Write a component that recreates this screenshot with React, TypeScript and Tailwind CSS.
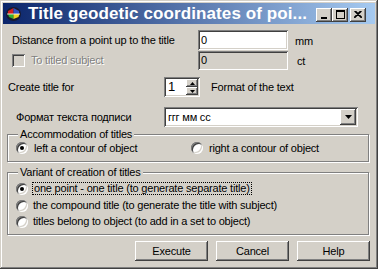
import React from "react";

const sunken =
  "shadow-[inset_1px_1px_#808080,inset_-1px_-1px_#ffffff,inset_2px_2px_#404040,inset_-2px_-2px_#d4d0c8]";
const raised =
  "shadow-[inset_-1px_-1px_#404040,inset_1px_1px_#ffffff,inset_-2px_-2px_#808080,inset_2px_2px_#d4d0c8]";

function Radio({ checked }: { checked?: boolean }) {
  return (
    <div
      className={`w-[12px] h-[12px] shrink-0 rounded-full bg-white flex items-center justify-center ${sunken}`}
    >
      {checked && <div className="w-[4px] h-[4px] rounded-full bg-black" />}
    </div>
  );
}

function TitleBtn({ children }: { children: React.ReactNode }) {
  return (
    <div
      className={`w-[16px] h-[14px] bg-[#d4d0c8] flex items-center justify-center ${raised}`}
    >
      {children}
    </div>
  );
}

export default function App() {
  return (
    <div className="w-[378px] h-[269px] bg-[#d4d0c8] font-['Liberation_Sans',Arial,sans-serif] text-[11px] tracking-[-0.2px] text-black p-[3px] flex flex-col shadow-[inset_-1px_-1px_#404040,inset_1px_1px_#d4d0c8,inset_-2px_-2px_#808080,inset_2px_2px_#ffffff]">
      {/* title bar */}
      <div className="h-[21px] flex items-center bg-[linear-gradient(to_right,#0a246a,#a6caf0)] pl-[2px] pr-[9px]">
        <svg width="17" height="16" viewBox="0 0 17 16" className="shrink-0">
          <ellipse cx="8.5" cy="8" rx="7.5" ry="7" fill="#1a1a2e" />
          <path d="M8.5 2 L3 5 L3 8 L8.5 8 Z" fill="#d02020" />
          <path d="M8.5 2 L14 5 L14 8 L8.5 8 Z" fill="#3050c0" />
          <path d="M3 8 L8.5 8 L8.5 13 L4 11 Z" fill="#30b030" />
          <path d="M8.5 8 L14.5 8 L13.5 11 L8.5 13 Z" fill="#f0d020" />
          <path d="M2 8 L15 8" stroke="#ffffff" strokeWidth="0.8" />
        </svg>
        <span className="ml-[6px] text-white font-bold text-[17px] tracking-[0.1px] leading-none whitespace-nowrap">
          Title geodetic coordinates of poi...
        </span>
        <div className="flex-1" />
        <div className="flex items-center mt-[2px]">
          <TitleBtn>
            <svg width="8" height="8" viewBox="0 0 8 8">
              <rect x="1" y="6" width="6" height="2" fill="#000" />
            </svg>
          </TitleBtn>
          <TitleBtn>
            <svg width="9" height="9" viewBox="0 0 9 9">
              <rect x="0.5" y="0.5" width="8" height="8" fill="none" stroke="#000" />
              <rect x="0" y="0" width="9" height="2" fill="#000" />
            </svg>
          </TitleBtn>
          <div className="w-[2px]" />
          <TitleBtn>
            <svg width="8" height="7" viewBox="0 0 8 7">
              <path d="M0.5 0 L7.5 7 M1.5 0 L8 6.5 M7.5 0 L0.5 7 M6.5 0 L0 6.5" stroke="#000" strokeWidth="1.1" />
            </svg>
          </TitleBtn>
        </div>
      </div>

      {/* row 1 */}
      <div className="mt-[6px] h-[20px] flex items-center">
        <div className="w-[195px] pl-[9px]">Distance from a point up to the title</div>
        <div className={`w-[90px] h-[20px] bg-white flex items-center pl-[3px] ${sunken}`}>0</div>
        <div className="ml-[7px] mt-[2px]">mm</div>
      </div>

      {/* row 2 */}
      <div className="mt-[1px] h-[19px] flex items-center">
        <div className="w-[195px] pl-[9px] flex items-center">
          <div className={`w-[13px] h-[13px] bg-[#d4d0c8] ${sunken}`} />
          <span className="ml-[6px] text-[#808080] [text-shadow:1px_1px_#ffffff]">To titled subject</span>
        </div>
        <div className={`w-[90px] h-[19px] bg-[#d4d0c8] flex items-center pl-[3px] ${sunken}`}>0</div>
        <div className="ml-[9px] mt-[2px]">ct</div>
      </div>

      {/* row 3 */}
      <div className="mt-[7px] h-[20px] flex items-center">
        <div className="w-[161px] pl-[5px]">Create title for</div>
        <div className={`w-[36px] h-[20px] bg-white p-[2px] flex ${sunken}`}>
          <div className="flex-1 flex items-center pl-[2px] text-[13px]">1</div>
          <div className="w-[12px] flex flex-col">
            <div className={`h-[8px] bg-[#d4d0c8] flex items-center justify-center ${raised}`}>
              <svg width="5" height="3" viewBox="0 0 5 3">
                <path d="M0 3 L2.5 0 L5 3 Z" fill="#000" />
              </svg>
            </div>
            <div className={`h-[8px] bg-[#d4d0c8] flex items-center justify-center ${raised}`}>
              <svg width="5" height="3" viewBox="0 0 5 3">
                <path d="M0 0 L2.5 3 L5 0 Z" fill="#000" />
              </svg>
            </div>
          </div>
        </div>
        <div className="ml-[11px]">Format of the text</div>
      </div>

      {/* row 4 */}
      <div className="mt-[10px] h-[20px] flex items-center">
        <div className="w-[161px] pl-[13px]">Формат текста подписи</div>
        <div className={`w-[194px] h-[20px] bg-white p-[2px] flex ${sunken}`}>
          <div className="flex-1 flex items-center pl-[2px]">ггг мм сс</div>
          <div className={`w-[16px] h-[16px] bg-[#d4d0c8] flex items-center justify-center ${raised}`}>
            <svg width="7" height="4" viewBox="0 0 7 4">
              <path d="M0 0 L7 0 L3.5 4 Z" fill="#000" />
            </svg>
          </div>
        </div>
      </div>

      {/* group 1 */}
      <div className="relative mt-[7px] ml-[4px] w-[362px] h-[28px] border border-[#808080] shadow-[inset_1px_1px_#ffffff,1px_1px_#ffffff] flex items-center">
        <div className="absolute left-[10px] top-[-7px] px-[2px] bg-[#d4d0c8] leading-[13px]">
          Accommodation of titles
        </div>
        <div className="w-[183px] pl-[8px] flex items-center">
          <Radio checked />
          <span className="ml-[6px]">left a contour of object</span>
        </div>
        <div className="flex items-center">
          <Radio />
          <span className="ml-[6px]">right a contour of object</span>
        </div>
      </div>

      {/* group 2 */}
      <div className="relative mt-[10px] ml-[4px] w-[362px] h-[63px] border border-[#808080] shadow-[inset_1px_1px_#ffffff,1px_1px_#ffffff] flex flex-col pt-[8px]">
        <div className="absolute left-[10px] top-[-7px] px-[2px] bg-[#d4d0c8] leading-[13px]">
          Variant of creation of titles
        </div>
        <div className="h-[15px] pl-[8px] flex items-center">
          <Radio checked />
          <span className="ml-[4px] px-[1px] border border-dotted border-black leading-[11px]">
            one point - one title (to generate separate title)
          </span>
        </div>
        <div className="mt-[2px] h-[15px] pl-[8px] flex items-center">
          <Radio />
          <span className="ml-[5px]">the compound title (to generate the title with subject)</span>
        </div>
        <div className="mt-[1px] h-[15px] pl-[8px] flex items-center">
          <Radio />
          <span className="ml-[5px]">titles belong to object (to add in a set to object)</span>
        </div>
      </div>

      {/* buttons */}
      <div className="mt-[6px] h-[20px] flex justify-end gap-[8px] pr-[5px]">
        {["Execute", "Cancel", "Help"].map((t) => (
          <div
            key={t}
            className={`w-[73px] h-[20px] bg-[#d4d0c8] flex items-center justify-center ${raised}`}
          >
            {t}
          </div>
        ))}
      </div>
    </div>
  );
}
